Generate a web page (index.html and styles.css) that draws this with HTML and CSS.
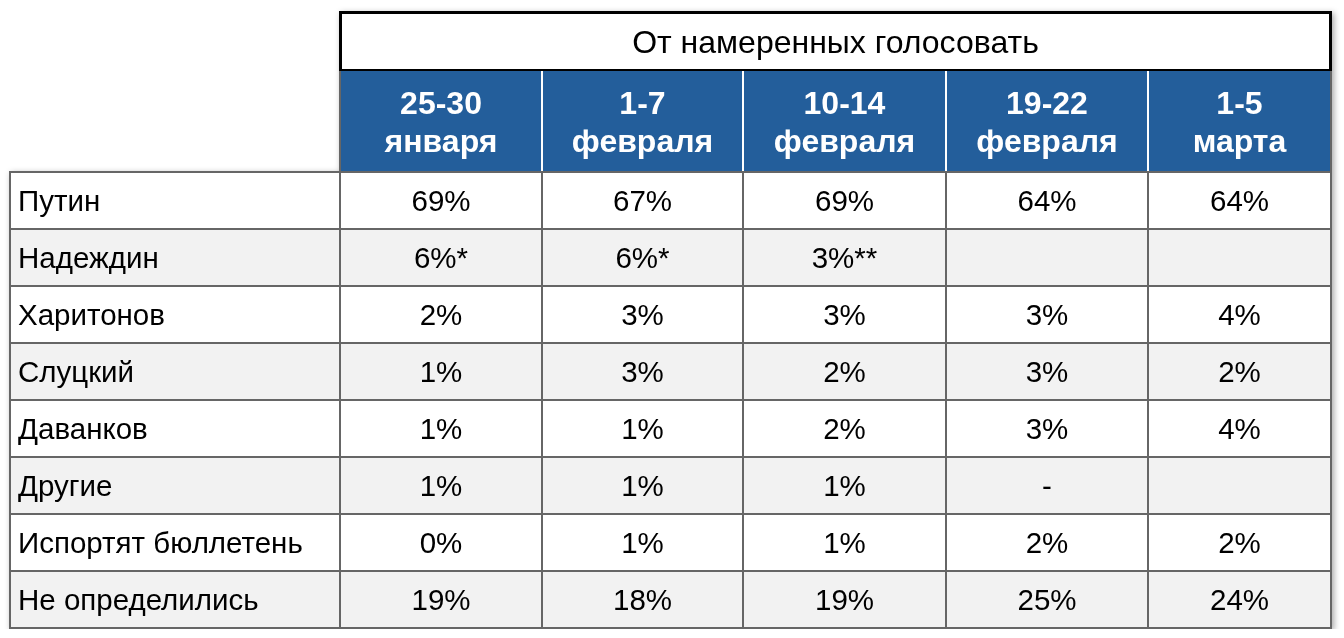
FILE: index.html
```html
<!DOCTYPE html>
<html lang="ru">
<head>
<meta charset="utf-8">
<link rel="stylesheet" href="styles.css">
</head>
<body>
<div class="page">
  <div class="sheet">
    <div class="head">
      <div class="title">От намеренных голосовать</div>
      <div class="cols">
        <div class="col-h">25-30<br>января</div>
        <div class="col-h">1-7<br>февраля</div>
        <div class="col-h">10-14<br>февраля</div>
        <div class="col-h">19-22<br>февраля</div>
        <div class="col-h">1-5<br>марта</div>
      </div>
    </div>
    <div class="body">
      <div class="c lab">Путин</div><div class="c">69%</div><div class="c">67%</div><div class="c">69%</div><div class="c">64%</div><div class="c">64%</div>
      <div class="c lab alt">Надеждин</div><div class="c alt">6%*</div><div class="c alt">6%*</div><div class="c alt">3%**</div><div class="c alt"></div><div class="c alt"></div>
      <div class="c lab">Харитонов</div><div class="c">2%</div><div class="c">3%</div><div class="c">3%</div><div class="c">3%</div><div class="c">4%</div>
      <div class="c lab alt">Слуцкий</div><div class="c alt">1%</div><div class="c alt">3%</div><div class="c alt">2%</div><div class="c alt">3%</div><div class="c alt">2%</div>
      <div class="c lab">Даванков</div><div class="c">1%</div><div class="c">1%</div><div class="c">2%</div><div class="c">3%</div><div class="c">4%</div>
      <div class="c lab alt">Другие</div><div class="c alt">1%</div><div class="c alt">1%</div><div class="c alt">1%</div><div class="c alt">-</div><div class="c alt"></div>
      <div class="c lab">Испортят бюллетень</div><div class="c">0%</div><div class="c">1%</div><div class="c">1%</div><div class="c">2%</div><div class="c">2%</div>
      <div class="c lab alt">Не определились</div><div class="c alt">19%</div><div class="c alt">18%</div><div class="c alt">19%</div><div class="c alt">25%</div><div class="c alt">24%</div>
    </div>
  </div>
</div>
</body>
</html>
```
FILE: styles.css
```css
html, body {
  margin: 0;
  padding: 0;
  background: #ffffff;
}
body {
  font-family: "Liberation Sans", Arial, sans-serif;
  color: #000;
}
.page {
  padding: 11px 0 0 9px;
}
.sheet {
  width: 1323px;
  filter: drop-shadow(2px 2px 3px rgba(0, 0, 0, 0.35));
}
.head {
  margin-left: 330px;
  width: 993px;
}
.title {
  box-sizing: border-box;
  height: 60px;
  border: 3px solid #000;
  border-bottom-width: 2px;
  background: #fff;
  font-size: 32px;
  display: flex;
  align-items: center;
  justify-content: center;
  padding-top: 2px;
}
.cols {
  box-sizing: border-box;
  height: 100px;
  display: grid;
  grid-template-columns: 200px 199px 201px 200px 181px;
  column-gap: 2px;
  background: #fff;
  border-left: 2px solid #666;
  border-right: 2px solid #666;
}
.col-h {
  background: #235e9b;
  color: #fff;
  font-weight: bold;
  font-size: 32px;
  line-height: 38px;
  text-align: center;
  display: flex;
  align-items: center;
  justify-content: center;
  padding-top: 2px;
}
.body {
  display: grid;
  grid-template-columns: 328px 200px 199px 201px 200px 181px;
  grid-auto-rows: 55px;
  gap: 2px;
  padding: 2px;
  background: #666;
}
.c {
  background: #fff;
  font-size: 29.5px;
  display: flex;
  align-items: center;
  justify-content: center;
}
.c.alt {
  background: #f2f2f2;
}
.c.lab {
  justify-content: flex-start;
  padding-left: 7px;
}
```
